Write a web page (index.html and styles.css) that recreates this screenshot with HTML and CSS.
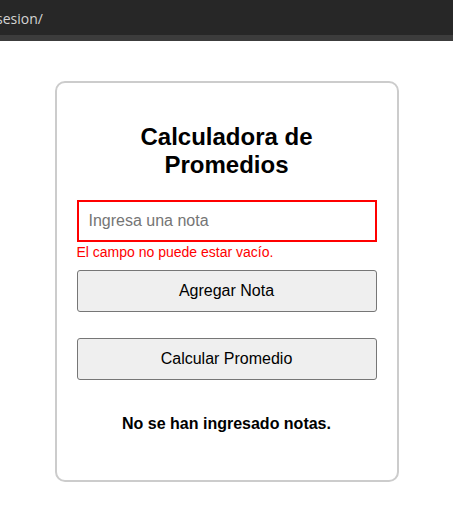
FILE: index.html
```html
<!DOCTYPE html>
<html lang="es">
<head>
<meta charset="utf-8">
<title>Calculadora de Promedios</title>
<link rel="stylesheet" href="styles.css">
</head>
<body>
<div class="topbar"><span class="url">sesion/</span></div>
<div class="strip"></div>
<main class="page">
  <section class="card">
    <h2 class="title">Calculadora de<br>Promedios</h2>
    <input class="nota" type="text" placeholder="Ingresa una nota">
    <p class="error">El campo no puede estar vacío.</p>
    <button class="btn btn-add" type="button">Agregar Nota</button>
    <button class="btn btn-calc" type="button">Calcular Promedio</button>
    <p class="result">No se han ingresado notas.</p>
  </section>
</main>
</body>
</html>
```
FILE: styles.css
```css
html, body {
  margin: 0;
  padding: 0;
  background: #ffffff;
}
body {
  font-family: "Liberation Sans", Arial, sans-serif;
  color: #000;
}
.topbar {
  height: 35px;
  background: #272727;
  display: flex;
  align-items: center;
  overflow: hidden;
}
.url {
  font-family: "Open Sans", "Noto Sans", sans-serif;
  font-size: 14px;
  color: #d4d4d4;
  margin-left: -4px;
  margin-top: 1px;
}
.strip {
  height: 6px;
  background: #3c3c3c;
}
.page {
  display: flex;
  justify-content: center;
  padding-top: 40px;
}
.card {
  width: 300px;
  padding: 20px;
  border: 2px solid #cccccc;
  border-radius: 10px;
  display: flex;
  flex-direction: column;
  align-items: stretch;
}
.title {
  margin: 20px 0 21px;
  font-size: 24px;
  line-height: 28px;
  font-weight: bold;
  text-align: center;
}
.nota {
  box-sizing: border-box;
  width: 100%;
  height: 42px;
  margin: 0;
  padding: 0 10px;
  border: 2px solid #ff0000;
  border-radius: 0;
  font-family: "Liberation Sans", Arial, sans-serif;
  font-size: 16px;
  outline: none;
}
.nota::placeholder {
  color: #757575;
}
.error {
  margin: 2px 0 0;
  font-size: 14px;
  line-height: 16px;
  color: #ff0000;
}
.btn {
  box-sizing: border-box;
  width: 100%;
  height: 42px;
  margin: 0;
  padding: 0;
  background: #efefef;
  border: 1px solid #767676;
  border-radius: 3px;
  font-family: "Liberation Sans", Arial, sans-serif;
  font-size: 16px;
  color: #000;
}
.btn-add {
  margin-top: 10px;
}
.btn-calc {
  margin-top: 26px;
}
.result {
  margin: 35px 0 27px;
  font-size: 16px;
  line-height: 18px;
  font-weight: bold;
  text-align: center;
}
```
